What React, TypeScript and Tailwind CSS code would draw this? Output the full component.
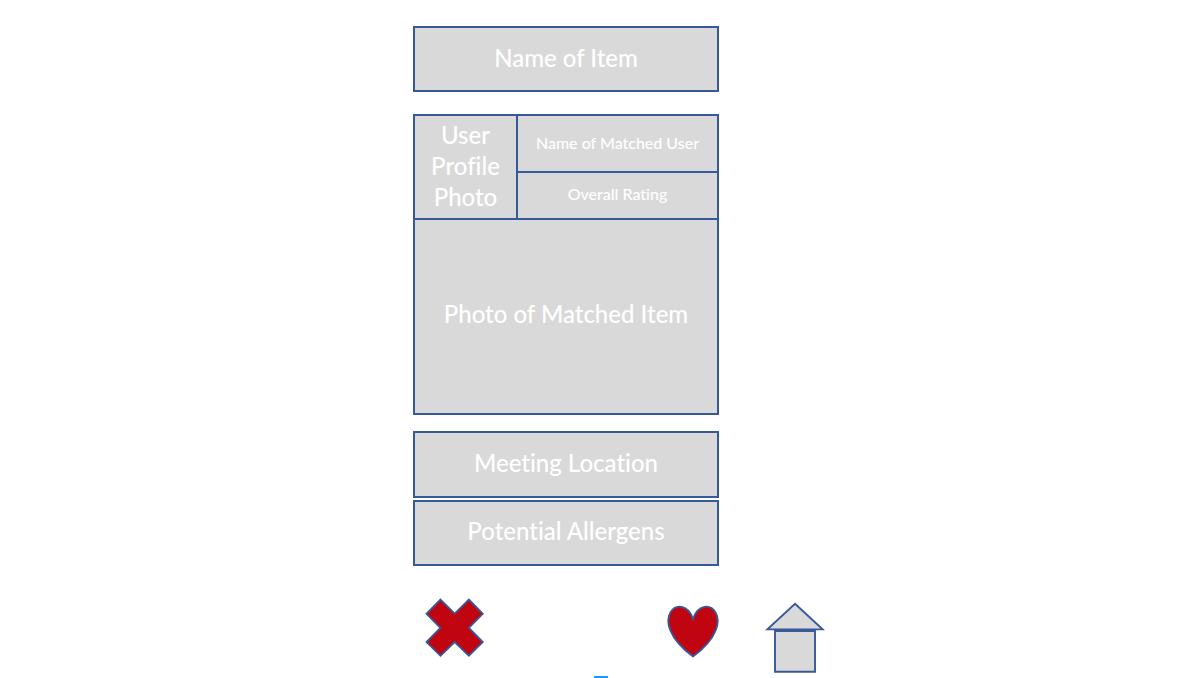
import type { ReactNode } from "react";

function Panel({ children, className = "" }: { children: ReactNode; className?: string }) {
  return (
    <section
      className={`flex items-center justify-center border-2 border-[#36599a] bg-[#d9d9d9] text-center ${className}`}
    >
      {children}
    </section>
  );
}

function CrossIcon() {
  return (
    <svg className="block" width="60" height="60" viewBox="0 0 60 60" aria-hidden="true">
      <path
        d="M15.5 1.6 L29.7 15.6 L43.9 1.6 L57.8 15.8 L43.9 29.8 L57.8 44 L43.9 57.8 L29.7 44 L15.5 57.8 L1.5 44 L15.4 29.8 L1.5 15.8 Z"
        fill="#c00510"
        stroke="#36599a"
        strokeWidth="1.8"
      />
    </svg>
  );
}

function HeartIcon() {
  return (
    <svg className="block" width="56" height="56" viewBox="0 0 56 56" aria-hidden="true">
      <path
        d="M28 17 C38 -13.2 78.2 17 28 54.5 C-22.2 17 18 -13.2 28 17 Z"
        fill="#c00510"
        stroke="#36599a"
        strokeWidth="1.8"
      />
    </svg>
  );
}

function HouseIcon() {
  return (
    <svg className="block" width="60" height="72" viewBox="0 0 60 72" aria-hidden="true">
      <path d="M30 1.8 L57.6 27.4 H2.4 Z" fill="#d9d9d9" stroke="#36599a" strokeWidth="1.9" />
      <path d="M10 29 H50 V69.8 H10 Z" fill="#d9d9d9" stroke="#36599a" strokeWidth="1.9" />
    </svg>
  );
}

export default function App() {
  return (
    <main className="flex min-h-screen justify-center bg-white pt-[26px] pl-11 font-['Lato',sans-serif] text-2xl font-medium text-white [font-variant-ligatures:none]">
      <div className="flex w-[412px] flex-col">
        <div className="flex w-[306px] flex-col">
          <Panel className="h-[66px] pb-0.5">
            <h1>Name of Item</h1>
          </Panel>

          <div className="mt-[22px] border-2 border-[#36599a] bg-[#d9d9d9] text-center">
            <div className="flex h-[104px] border-b-2 border-[#36599a]">
              <div className="flex w-[103px] items-center justify-center border-r-2 border-[#36599a] px-2 pb-1 leading-[31px]">
                User Profile Photo
              </div>
              <div className="flex flex-1 flex-col text-base">
                <div className="flex h-[57px] items-center justify-center border-b-2 border-[#36599a] pb-0.5">
                  Name of Matched User
                </div>
                <div className="flex flex-1 items-center justify-center pb-1">Overall Rating</div>
              </div>
            </div>
            <div className="flex h-[193px] items-center justify-center pb-1.5">
              Photo of Matched Item
            </div>
          </div>

          <Panel className="mt-4 h-[67px] pb-1">Meeting Location</Panel>
          <Panel className="mt-0.5 h-[66px] pb-1">Potential Allergens</Panel>
        </div>

        <nav aria-label="Match actions" className="mt-8 flex items-start pl-3">
          <button type="button" aria-label="Reject match">
            <CrossIcon />
          </button>
          <button type="button" aria-label="Like match" className="mt-1 ml-auto">
            <HeartIcon />
          </button>
          <a href="#home" aria-label="Home" className="mt-1 ml-11">
            <HouseIcon />
          </a>
        </nav>
        <div className="mt-0.5 ml-[181px] h-0.5 w-3.5 bg-[#1c97ff]" />
      </div>
    </main>
  );
}
